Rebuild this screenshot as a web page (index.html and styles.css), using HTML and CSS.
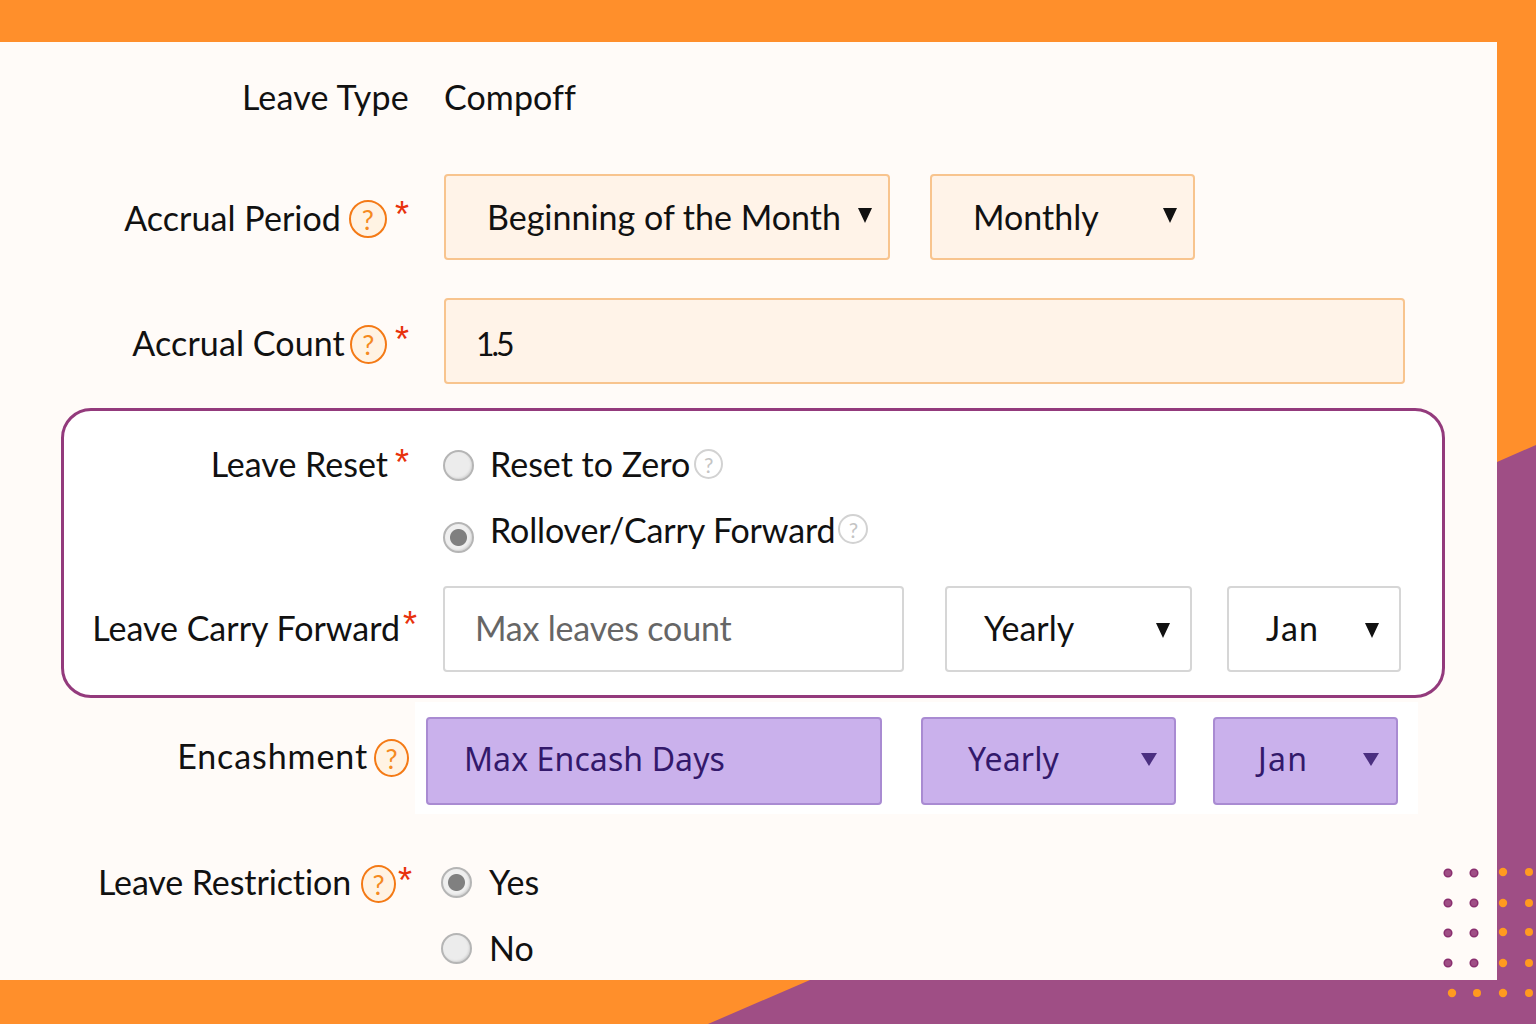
FILE: index.html
```html
<!DOCTYPE html>
<html lang="en">
<head>
<meta charset="utf-8">
<title>Leave settings</title>
<link rel="stylesheet" href="styles.css">
</head>
<body>
<svg class="backdrop" width="1536" height="1024" viewBox="0 0 1536 1024" aria-hidden="true">
  <rect width="1536" height="1024" fill="#ff8f2b"/>
  <polygon points="1536,445 1497,462 1497,980 810,980 708,1024 1536,1024" fill="#9f4e85"/>
</svg>
<main class="card">
  <div class="row row-type">
    <div class="label type-label">Leave Type</div>
    <div class="value">Compoff</div>
  </div>
  <div class="row row-accrual">
    <div class="label period-label">Accrual Period<span class="help help-period">?</span><span class="star star-period">*</span></div>
    <div class="select peach w446 pl44"><span>Beginning of the Month</span><i class="tri"></i></div>
    <div class="select peach w265 pl44 ml40"><span>Monthly</span><i class="tri"></i></div>
  </div>
  <div class="row row-count">
    <div class="label count-label">Accrual Count<span class="help help-count">?</span><span class="star star-count">*</span></div>
    <input class="field peach w961 count-input" type="text" value="1.5">
  </div>
  <section class="box">
    <div class="row radio-row first">
      <div class="label box-label reset-label">Leave Reset<span class="star star-reset">*</span></div>
      <span class="radio"></span>
      <span class="opt">Reset to Zero</span><span class="mini">?</span>
    </div>
    <div class="row radio-row second">
      <div class="label box-label"></div>
      <span class="radio on low"></span>
      <span class="opt opt-roll">Rollover/Carry Forward</span><span class="mini mini-roll">?</span>
    </div>
    <div class="row carry-row">
      <div class="label box-label carry-label">Leave Carry Forward<span class="star star-carry">*</span></div>
      <input class="field plain w461" type="text" placeholder="Max leaves count">
      <div class="select plain w247 pl39 ml41"><span>Yearly</span><i class="tri"></i></div>
      <div class="select plain w174 pl39 ml35"><span class="wide">Jan</span><i class="tri"></i></div>
    </div>
  </section>
  <div class="row encash-row">
    <div class="label encash-label"><span class="encash-text">Encashment</span><span class="help help-encash">?</span></div>
    <div class="band">
      <div class="select violet w456 pl-encash"><span>Max Encash Days</span></div>
      <div class="select violet w255 pl47 ml39"><span>Yearly</span><i class="tri"></i></div>
      <div class="select violet w185 pl45 ml37"><span class="wide">Jan</span><i class="tri"></i></div>
    </div>
  </div>
  <div class="row radio-row restrict-one">
    <div class="label restrict-label">Leave Restriction<span class="help help-restrict">?</span><span class="star star-restrict">*</span></div>
    <span class="radio on"></span>
    <span class="opt opt-small">Yes</span>
  </div>
  <div class="row radio-row restrict-two">
    <div class="label restrict-label"></div>
    <span class="radio"></span>
    <span class="opt opt-small">No</span>
  </div>
</main>
<svg class="dots" width="100" height="140" viewBox="1436 864 100 140" aria-hidden="true">
  <g fill="#9f4e85" stroke="#8a2f6f" stroke-width="1.5">
    <circle cx="1448" cy="873" r="3.8"/><circle cx="1474" cy="873" r="3.8"/>
    <circle cx="1448" cy="903" r="3.8"/><circle cx="1474" cy="903" r="3.8"/>
    <circle cx="1448" cy="933" r="3.8"/><circle cx="1474" cy="933" r="3.8"/>
    <circle cx="1448" cy="963" r="3.8"/><circle cx="1474" cy="963" r="3.8"/>
  </g>
  <g fill="#ff9a1f">
    <circle cx="1503" cy="872" r="4.2"/><circle cx="1529" cy="872" r="4"/>
    <circle cx="1503" cy="903" r="4.2"/><circle cx="1529" cy="903" r="4"/>
    <circle cx="1503" cy="932" r="4.2"/><circle cx="1529" cy="932" r="4"/>
    <circle cx="1503" cy="963" r="4.2"/><circle cx="1529" cy="963" r="4"/>
    <circle cx="1452" cy="993" r="4.2"/><circle cx="1477" cy="993" r="4"/>
    <circle cx="1503" cy="993" r="4.2"/><circle cx="1529" cy="993" r="4"/>
  </g>
</svg>
</body>
</html>
```
FILE: styles.css
```css
* { box-sizing: border-box; }
html, body { margin: 0; height: 1024px; overflow: hidden; }
body {
  position: relative;
  width: 1536px;
  font-family: "Lato", "Open Sans", sans-serif;
  font-size: 34px;
  color: #111;
}
.backdrop { position: absolute; left: 0; top: 0; }
.dots { position: absolute; left: 1436px; top: 864px; }
.card {
  position: absolute;
  left: 0;
  top: 42px;
  width: 1497px;
  height: 938px;
  padding-top: 13px;
  background: #fffbf8;
  overflow: hidden;
}
.row { display: flex; align-items: center; }
.label {
  display: flex;
  align-items: center;
  justify-content: flex-end;
  flex: none;
  width: 409px;
  margin-right: 35px;
  white-space: nowrap;
}
.row-type { height: 86px; }
.row-accrual { margin-top: 33px; }
.row-count { margin-top: 38px; }
.value { white-space: nowrap; padding-bottom: 4px; letter-spacing: .1px; }
.type-label { padding-bottom: 4px; letter-spacing: .2px; }
.period-label { letter-spacing: .05px; }
.count-label { padding-top: 2px; letter-spacing: .1px; }
.reset-label { padding-bottom: 4px; }

.star {
  font-family: "Liberation Sans", sans-serif;
  font-size: 36px;
  line-height: 24px;
  color: #e8320c;
  margin-left: 7px;
}
.star-period { margin-top: -4px; margin-left: 8px; }
.star-count { margin-top: -4px; margin-left: 8px; }
.star-reset { margin-top: 0; margin-left: 7px; }
.star-carry { margin-top: -4px; margin-left: 3px; }
.star-restrict { margin-top: 0; margin-left: 2px; }
.help {
  display: inline-flex;
  align-items: center;
  justify-content: center;
  flex: none;
  width: 38px;
  height: 38px;
  margin-left: 8px;
  border: 2px solid #f47a16;
  border-radius: 50%;
  background: #fff3e3;
  color: #f58a1f;
  font-size: 27px;
}
.help-period { margin-top: 4px; }
.help-count { margin-top: 5px; margin-left: 5px; width: 37px; height: 39px; }
.help-encash { margin-left: 6px; width: 35px; }
.help-restrict { margin-top: 6px; margin-left: 10px; width: 35px; }
.mini {
  display: inline-flex;
  align-items: center;
  justify-content: center;
  flex: none;
  width: 29px;
  height: 30px;
  margin-left: 4px;
  margin-bottom: 2px;
  border: 2px solid #d2d2d2;
  border-radius: 50%;
  background: #fff;
  color: #c4c4c4;
  font-size: 21px;
}
.mini-roll { margin-bottom: 6px; margin-left: 3px; width: 30px; }

.select, .field {
  flex: none;
  height: 86px;
  border-radius: 4px;
  white-space: nowrap;
  font: inherit;
  color: inherit;
}
.select { display: flex; align-items: center; justify-content: space-between; }
.select > span { padding-bottom: 2px; }
.field { padding: 0 30px 4px; outline: none; letter-spacing: -.2px; }
.field::placeholder { color: #666; opacity: 1; }
.count-input { padding: 4px 30px 0; letter-spacing: -3px; font-size: 32px; }
.peach { background: #fff3e8; border: 2px solid #f8c48e; }
.plain { background: #fff; border: 2px solid #d6d6d6; }
.plain > span { padding-bottom: 4px; }
.plain > .wide { letter-spacing: 1.2px; }
.violet {
  height: 88px;
  background: #cab1ec;
  border: 2px solid #a98bd2;
  color: #33196b;
  font-family: "Noto Sans", sans-serif;
  font-size: 32px;
}
.violet > span { padding-bottom: 6px; letter-spacing: .1px; }
.violet > .wide { letter-spacing: 1.3px; }
.tri {
  flex: none;
  width: 0;
  height: 0;
  margin-right: 16px;
  margin-bottom: 3px;
  border-left: 7.5px solid transparent;
  border-right: 7.5px solid transparent;
  border-top: 15px solid #111;
}
.plain .tri { margin-right: 20px; margin-bottom: -2px; }
.violet .tri {
  margin-right: 17px;
  margin-bottom: 4px;
  border-left-width: 8px;
  border-right-width: 8px;
  border-top: 13px solid #4b2f80;
}
.w446 { width: 446px; } .w265 { width: 265px; } .w961 { width: 961px; }
.w461 { width: 461px; } .w247 { width: 247px; } .w174 { width: 174px; }
.w456 { width: 456px; } .w255 { width: 255px; } .w185 { width: 185px; }
.pl39 { padding-left: 37px; } .pl44 { padding-left: 41px; }
.pl45 { padding-left: 43px; } .pl47 { padding-left: 45px; }
.pl-encash { padding-left: 36px; }
.ml35 { margin-left: 35px; } .ml37 { margin-left: 37px; } .ml39 { margin-left: 39px; }
.ml40 { margin-left: 40px; } .ml41 { margin-left: 41px; }

.box {
  width: 1384px;
  height: 290px;
  margin: 24px 0 0 61px;
  border: 3px solid #933a7c;
  border-radius: 30px;
  background: #fff;
}
.box-label { width: 345px; margin-right: 34px; }
.carry-label { width: 353px; margin-right: 26px; padding-bottom: 4px; }
.radio-row { height: 40px; }
.first { margin-top: 34px; }
.second { margin-top: 27px; }
.carry-row { margin-top: 34px; }
.radio {
  flex: none;
  width: 31px;
  height: 31px;
  margin-right: 17px;
  border: 2.5px solid #b5b5b5;
  border-radius: 50%;
  background: #ececec;
  box-shadow: inset -1px -1px 2px #d4d4d4;
}
.radio.on { background: radial-gradient(circle, #808080 0 8px, #efefef 9px); }
.radio.low { margin-top: 10px; }
.opt { white-space: nowrap; padding-bottom: 4px; margin-left: -1px; }
.opt-roll { padding-bottom: 6px; letter-spacing: -.15px; }
.opt-small { padding-bottom: 2px; margin-left: 0; }

.encash-row { margin-top: 4px; }
.encash-label { width: 409px; margin-right: 6px; }
.encash-text { padding-bottom: 6px; letter-spacing: .9px; }
.band {
  display: flex;
  width: 1003px;
  height: 112px;
  padding: 15px 0 0 11px;
  background: #fff;
}
.restrict-one { margin-top: 48px; }
.restrict-two { margin-top: 26px; }
.restrict-label { width: 412px; margin-right: 29px; letter-spacing: -.1px; }
.restrict-one .restrict-label { padding-bottom: 2px; }
```
